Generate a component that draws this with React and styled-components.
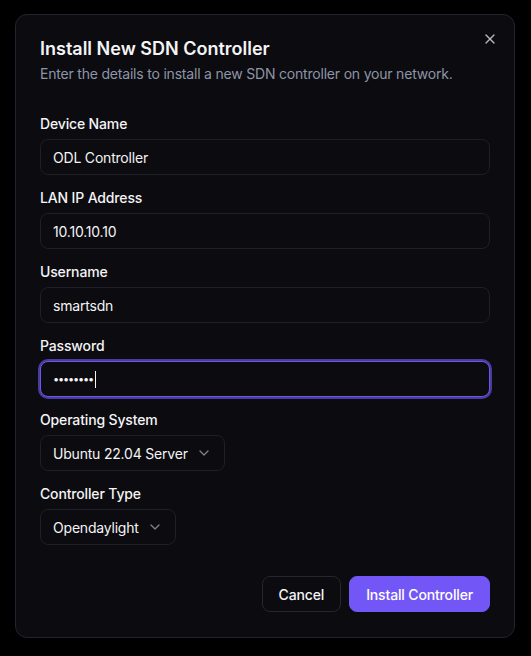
import React from "react";
import styled, { createGlobalStyle } from "styled-components";
import { X, ChevronDown } from "lucide-react";

const GlobalStyle = createGlobalStyle`
  html, body {
    margin: 0;
    padding: 0;
    background: #000000;
    font-family: Inter, "Noto Sans", "Liberation Sans", sans-serif;
    -webkit-font-smoothing: antialiased;
  }
  * { box-sizing: border-box; }
`;

const fields = [
  { label: "Device Name", value: "ODL Controller" },
  { label: "LAN IP Address", value: "10.10.10.10" },
  { label: "Username", value: "smartsdn" },
];

const InstallDialog = () => {
  return (
    <Overlay>
      <GlobalStyle />
      <Dialog>
        <CloseButton aria-label="Close">
          <X size={16} strokeWidth={2} />
        </CloseButton>
        <Header>
          <Title>Install New SDN Controller</Title>
          <Description>
            Enter the details to install a new SDN controller on your network.
          </Description>
        </Header>
        <Form>
          {fields.map((f) => (
            <Field key={f.label}>
              <Label>{f.label}</Label>
              <Input defaultValue={f.value} />
            </Field>
          ))}
          <Field>
            <Label>Password</Label>
            <FakeInput focused>
              <Dots>••••••••</Dots>
              <Caret />
            </FakeInput>
          </Field>
          <Field>
            <Label>Operating System</Label>
            <SelectTrigger>
              <span>Ubuntu 22.04 Server</span>
              <ChevronDown size={16} strokeWidth={2} />
            </SelectTrigger>
          </Field>
          <Field>
            <Label>Controller Type</Label>
            <SelectTrigger>
              <span>Opendaylight</span>
              <ChevronDown size={16} strokeWidth={2} />
            </SelectTrigger>
          </Field>
        </Form>
        <Footer>
          <Button variant="outline">Cancel</Button>
          <Button>Install Controller</Button>
        </Footer>
      </Dialog>
    </Overlay>
  );
};

export default InstallDialog;

const Overlay = styled.div`
  min-height: 656px;
  display: flex;
  justify-content: flex-start;
  padding: 14px 0 0 15px;
`;

const Dialog = styled.div`
  position: relative;
  width: 500px;
  height: 624px;
  background: #0b0b10;
  border: 1px solid #25232f;
  border-radius: 12px;
  padding: 24px;
  display: flex;
  flex-direction: column;
  gap: 16px;
`;

const CloseButton = styled.button`
  position: absolute;
  top: 16px;
  right: 16px;
  padding: 0;
  border: none;
  background: transparent;
  color: #e4e4e7;
  opacity: 0.8;
  display: flex;
  cursor: pointer;
`;

const Header = styled.div`
  display: flex;
  flex-direction: column;
  gap: 6px;
  padding-top: 1px;
`;

const Title = styled.h2`
  margin: 0;
  font-size: 18px;
  line-height: 18px;
  font-weight: 600;
  letter-spacing: 0;
  color: #f4f4f5;
`;

const Description = styled.p`
  margin: 0;
  font-size: 14px;
  line-height: 20px;
  letter-spacing: -0.2px;
  color: #8e95a6;
`;

const Form = styled.div`
  display: flex;
  flex-direction: column;
  gap: 16px;
  padding: 17px 0 15px;
`;

const Field = styled.div`
  display: flex;
  flex-direction: column;
  align-items: flex-start;
  gap: 8px;
`;

const Label = styled.label`
  font-size: 14px;
  line-height: 14px;
  font-weight: 500;
  letter-spacing: -0.15px;
  color: #f4f4f5;
`;

const Input = styled.input`
  width: 100%;
  height: 36px;
  padding: 0 12px;
  background: #0b0b10;
  border: 1px solid #1f1e29;
  border-radius: 8px;
  font-family: inherit;
  font-size: 14px;
  letter-spacing: -0.2px;
  color: #f4f4f5;
  outline: none;
`;

const FakeInput = styled.div`
  width: 100%;
  height: 36px;
  padding: 0 12px;
  display: flex;
  align-items: center;
  background: #0b0b10;
  border: 1px solid ${(p) => (p.focused ? "#6a58e6" : "#1f1e29")};
  box-shadow: ${(p) => (p.focused ? "0 0 0 2px #4a3c9e" : "none")};
  border-radius: 8px;
`;

const Dots = styled.span`
  font-size: 11px;
  letter-spacing: -1.2px;
  color: #f4f4f5;
`;

const Caret = styled.span`
  width: 1px;
  height: 17px;
  margin-left: 2px;
  background: #f4f4f5;
`;

const SelectTrigger = styled.button`
  height: 36px;
  padding: 0 12px;
  display: flex;
  align-items: center;
  gap: 8px;
  background: #0b0b10;
  border: 1px solid #1f1e29;
  border-radius: 8px;
  font-family: inherit;
  font-size: 14px;
  letter-spacing: -0.2px;
  color: #f4f4f5;

  svg {
    opacity: 0.5;
  }
`;

const Footer = styled.div`
  display: flex;
  justify-content: flex-end;
  gap: 8px;
`;

const Button = styled.button`
  height: 36px;
  padding: 0 16px;
  border-radius: 8px;
  font-family: inherit;
  font-size: 14px;
  font-weight: 500;
  letter-spacing: -0.15px;
  cursor: pointer;
  color: ${(p) => (p.variant === "outline" ? "#f4f4f5" : "#ffffff")};
  background: ${(p) => (p.variant === "outline" ? "#0b0b10" : "#7357f6")};
  border: 1px solid ${(p) => (p.variant === "outline" ? "#27252f" : "#7357f6")};
`;
